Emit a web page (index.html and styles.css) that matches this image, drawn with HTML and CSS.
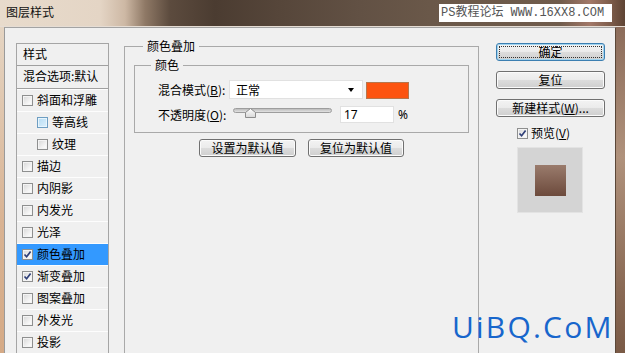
FILE: index.html
```html
<!DOCTYPE html>
<html lang="zh-CN">
<head>
<meta charset="utf-8">
<title>图层样式</title>
<link rel="stylesheet" href="styles.css">
</head>
<body>
<div class="window">
  <div class="titlebar"><span class="title">图层样式</span></div>
  <div class="frame">
    <div class="side-left"></div>
    <div class="dialog">
      <div class="list">
        <div class="head head1">样式</div>
        <div class="head head2">混合选项:默认</div>
        <div class="item"><span class="cb"></span><span>斜面和浮雕</span></div>
        <div class="item sub"><span class="cb hover"></span><span>等高线</span></div>
        <div class="item sub"><span class="cb"></span><span>纹理</span></div>
        <div class="item"><span class="cb"></span><span>描边</span></div>
        <div class="item"><span class="cb"></span><span>内阴影</span></div>
        <div class="item"><span class="cb"></span><span>内发光</span></div>
        <div class="item"><span class="cb"></span><span>光泽</span></div>
        <div class="item active"><span class="cb"><svg viewBox="0 0 9 9" width="9" height="9"><path d="M1.5 4.5 L3.6 6.8 L7.6 1.6" fill="none" stroke="#2f3f78" stroke-width="1.7"/></svg></span><span>颜色叠加</span></div>
        <div class="item"><span class="cb"><svg viewBox="0 0 9 9" width="9" height="9"><path d="M1.5 4.5 L3.6 6.8 L7.6 1.6" fill="none" stroke="#2f3f78" stroke-width="1.7"/></svg></span><span>渐变叠加</span></div>
        <div class="item"><span class="cb"></span><span>图案叠加</span></div>
        <div class="item"><span class="cb"></span><span>外发光</span></div>
        <div class="item"><span class="cb"></span><span>投影</span></div>
      </div>

      <fieldset class="group">
        <legend>颜色叠加</legend>
        <fieldset class="inner">
          <legend>颜色</legend>
          <div class="row row1">
            <span class="label">混合模式(<u>B</u>):</span>
            <div class="select"><span>正常</span><span class="arrow"></span></div>
            <span class="swatch"></span>
          </div>
          <div class="row row2">
            <span class="label">不透明度(<u>O</u>):</span>
            <div class="slider">
              <span class="track"></span>
              <svg class="thumb" viewBox="0 0 11 10" width="11" height="10"><defs><linearGradient id="tg" x1="0" y1="0" x2="0" y2="1"><stop offset="0" stop-color="#ffffff"/><stop offset="1" stop-color="#d8d8d8"/></linearGradient></defs><path d="M0.5 4.5 L5.5 0.5 L10.5 4.5 L10.5 9.5 L0.5 9.5 Z" fill="url(#tg)" stroke="#8c8c8c"/></svg>
            </div>
            <span class="num">17</span>
            <span class="pct">%</span>
          </div>
        </fieldset>
        <div class="btnrow">
          <button class="btn w97">设置为默认值</button>
          <button class="btn w96">复位为默认值</button>
        </div>
      </fieldset>

      <div class="side">
        <button class="btn wide focus"><span class="focusring">确定</span></button>
        <button class="btn wide">复位</button>
        <button class="btn wide">新建样式(<u>W</u>)...</button>
        <div class="preview-row"><span class="cb"><svg viewBox="0 0 9 9" width="9" height="9"><path d="M1.5 4.5 L3.6 6.8 L7.6 1.6" fill="none" stroke="#2f3f78" stroke-width="1.7"/></svg></span><span>预览(<u>V</u>)</span></div>
        <div class="preview"><span class="preview-swatch"></span></div>
      </div>
    </div>
    <div class="side-right"></div>
  </div>
  <div class="wm-top">PS教程论坛 WWW.16XX8.COM</div>
  <div class="wm-bottom">UiBQ.CoM</div>
</div>
</body>
</html>
```
FILE: styles.css
```css
* { box-sizing: border-box; margin: 0; padding: 0; }
html, body { width: 625px; height: 353px; overflow: hidden; }
body {
  font-family: "Noto Sans CJK SC", "Noto Sans", sans-serif;
  font-size: 12px;
  color: #000;
  background: #f0f0f0;
}
u { text-decoration: underline; text-underline-offset: 1px; }

.window {
  position: relative;
  width: 625px;
  height: 353px;
  overflow: hidden;
  display: flex;
  flex-direction: column;
}

.titlebar {
  height: 27px;
  flex: none;
  display: flex;
  align-items: center;
  padding: 0 0 2px 6px;
  border-bottom: 1px solid #e6ddd4;
  background: linear-gradient(90deg, #e8dbcc 0px, #e4d5c5 100px, #cdb8a4 125px, #8f7966 145px, #5c4b3e 170px, #4b3c31 215px, #56463a 280px, #625144 360px, #6a5849 430px, #705c4c 560px, #a27868 590px, #7a5a48 612px, #5e4434 625px);
}
.title { font-size: 12px; line-height: 14px; color: #111; }

.frame { flex: 1; display: flex; min-height: 0; }
.side-left { width: 4px; flex: none; background: linear-gradient(#e5d5c3, #d9b393 60%, #d5aa86); }
.side-right { width: 9px; flex: none; background: linear-gradient(#8c6c5a, #b0927c 40%, #8a6a55 80%, #7a5a46); }

.dialog {
  flex: 1;
  display: flex;
  align-items: flex-start;
  padding: 11px 0 0 11px;
  background: #f0f0f0;
  border-top: 1px solid #a3a3a3;
  border-left: 1px solid #9a9a9a;
  border-right: 1px solid #5b4738;
}

/* left style list */
.list {
  flex: none;
  width: 93px;
  height: 330px;
  margin-top: 4px;
  border: 1px solid #a5a5a5;
  background: #f0f0f0;
}
.head {
  display: flex;
  align-items: center;
  padding: 0 0 2px 6px;
  border-bottom: 1px solid #a0a0a0;
  line-height: 14px;
}
.head1 { height: 22px; }
.head2 { height: 23px; }
.item {
  height: 22px;
  display: flex;
  align-items: center;
  gap: 4px;
  padding: 0 0 1px 5px;
  border-top: 1px solid #fdfdfd;
  line-height: 14px;
}
.item.sub { padding-left: 20px; }
.item.active { background: #3399ff; background-clip: padding-box; }

.cb {
  flex: none;
  width: 11px;
  height: 11px;
  border: 1px solid #8e8f8f;
  background: linear-gradient(135deg, #d6d6d6, #f6f6f6 70%, #ffffff);
  box-shadow: inset 0 0 0 1px #f4f4f4;
  display: flex;
  align-items: center;
  justify-content: center;
}
.cb svg { display: block; }
.cb.hover {
  border-color: #6e9ec2;
  background: linear-gradient(135deg, #b5dcf4, #def0fb);
  box-shadow: inset 0 0 0 1px #e8f5fd;
}

/* middle group */
.group {
  flex: none;
  width: 355px;
  height: 330px;
  margin-left: 15px;
  border: 1px solid #a9a9a9;
  padding: 0 9px;
  min-inline-size: 0;
}
.group > legend {
  margin-left: 9px;
  padding: 0 4px;
  line-height: 14px;
}
.inner {
  margin-top: 5px;
  border: 1px solid #a9a9a9;
  padding: 8px 0 9px 0;
  min-inline-size: 0;
}
.inner > legend {
  margin-left: 16px;
  padding: 0 4px;
  line-height: 14px;
}
.row { display: flex; align-items: center; padding-left: 23px; }
.row1 { height: 19px; }
.row2 { height: 17px; margin-top: 7px; }
.label { width: 71px; flex: none; line-height: 14px; white-space: nowrap; }
.select {
  width: 134px;
  height: 19px;
  background: #fff;
  border: 1px solid #e1e1e1;
  display: flex;
  align-items: center;
  justify-content: space-between;
  padding: 0 8px 0 6px;
  line-height: 14px;
}
.arrow {
  width: 0;
  height: 0;
  border-left: 3.5px solid transparent;
  border-right: 3.5px solid transparent;
  border-top: 4px solid #000;
}
.swatch {
  width: 43px;
  height: 17px;
  margin: 2px 0 0 3px;
  background: #fc5410;
  border: 1px solid #b6764c;
}
.slider {
  position: relative;
  width: 99px;
  height: 17px;
  margin-left: 4px;
}
.track {
  position: absolute;
  left: 0;
  top: 2px;
  width: 99px;
  height: 5px;
  border: 1px solid #9d9d9d;
  border-radius: 3px;
  background: linear-gradient(#bcbcbc, #e2e2e2);
}
.thumb { position: absolute; left: 12px; top: 2px; }
.num {
  width: 54px;
  height: 17px;
  margin-left: 8px;
  background: #fff;
  border: 1px solid #e1e1e1;
  padding-left: 3px;
  line-height: 15px;
  font-family: "Noto Sans", sans-serif;
}
.pct { margin-left: 4px; line-height: 14px; font-family: "Noto Sans", sans-serif; }

.btnrow {
  display: flex;
  justify-content: center;
  gap: 12px;
  margin-top: 6px;
}

.btn {
  height: 18px;
  font: inherit;
  color: #000;
  line-height: 14px;
  border: 1px solid #707070;
  border-radius: 3px;
  background: linear-gradient(#f3f3f3 0%, #ebebeb 48%, #dcdcdc 52%, #cfcfcf 100%);
  box-shadow: inset 0 0 0 1px #fbfbfb;
  display: flex;
  align-items: center;
  justify-content: center;
  padding: 0 0 1px 0;
}
.w97 { width: 97px; }
.w96 { width: 96px; }

.side {
  flex: none;
  width: 109px;
  margin-left: 17px;
  margin-top: 4px;
  display: flex;
  flex-direction: column;
}
.btn.wide { width: 109px; margin-bottom: 10px; }
.btn.focus {
  border-color: #3c7fb1;
  box-shadow: inset 0 0 0 1px #9fd3ef;
  padding: 2px;
}
.focusring {
  flex: 1;
  align-self: stretch;
  border: 1px dotted #333;
  display: flex;
  align-items: center;
  justify-content: center;
  padding-bottom: 1px;
}

.preview-row {
  height: 16px;
  margin-top: -2px;
  display: flex;
  align-items: center;
  gap: 3px;
  padding-left: 21px;
  line-height: 14px;
}
.preview {
  width: 66px;
  height: 66px;
  margin: 6px 0 0 21px;
  background: #d4d4d4;
  border: 1px solid #e3e3e3;
  display: flex;
  align-items: center;
  justify-content: center;
}
.preview-swatch {
  width: 31px;
  height: 31px;
  background: linear-gradient(#9a7b6c, #6c4a3c);
}

/* watermarks overlaid on the screenshot */
.wm-top {
  position: absolute;
  left: 439px;
  top: 4px;
  width: 173px;
  height: 18px;
  background: #fff;
  color: #555;
  font-family: "Liberation Mono", "Noto Sans CJK SC", monospace;
  font-size: 12px;
  line-height: 18px;
  padding-left: 2px;
  white-space: nowrap;
  overflow: hidden;
}
.wm-bottom {
  position: absolute;
  left: 452px;
  top: 312px;
  font-family: "Open Sans", "Noto Sans", sans-serif;
  font-size: 30px;
  line-height: 30px;
  letter-spacing: 2.2px;
  color: #1766cc;
  white-space: nowrap;
}
```
